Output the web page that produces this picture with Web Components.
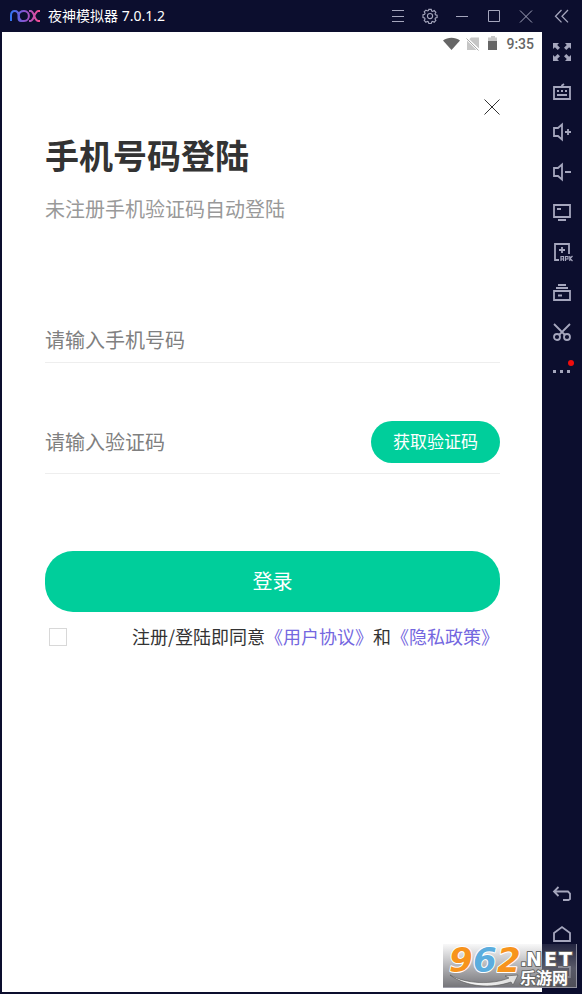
<!DOCTYPE html>
<html lang="zh-CN">
<head>
<meta charset="utf-8">
<title>夜神模拟器</title>
<style>
html, body { margin: 0; }
body { font-family: "Noto Sans", "Noto Sans CJK SC", sans-serif; background: #0c0e2e; }
</style>
</head>
<body>
<nox-window></nox-window>
<script>
const define = (name, html, setup) => customElements.define(name, class extends HTMLElement {
  connectedCallback() {
    if (this.shadowRoot) return;
    const t = document.createElement('template');
    t.innerHTML = html;
    this.attachShadow({ mode: 'open' }).append(t.content.cloneNode(true));
    if (setup) setup(this, this.shadowRoot);
  }
});

const icons = {
  menu: '<path d="M3 3.5h12M3 9.5h12M3 14.5h12"/>',
  gear: '<g transform="translate(1.300 1.300) scale(.86)" stroke-width="1.300"><path d="M7.6 1.200h2.800l.5 1.900 1.200.5 1.700-1 2 2-1 1.700.5 1.200 1.900.5v2.800l-1.900.5-.5 1.200 1 1.700-2 2-1.700-1-1.200.5-.5 1.900H7.600l-.5-1.900-1.200-.5-1.700 1-2-2 1-1.700-.5-1.200-1.900-.5V7.500l1.900-.5.5-1.200-1-1.700 2-2 1.700 1 1.200-.5z"/><circle cx="9" cy="9" r="3"/></g>',
  minimize: '<path d="M3 9.500h12"/>',
  maximize: '<path d="M3.500 3.500h11v11h-11z"/>',
  close: '<path d="M3 3.500l12 12M15 3.500l-12 12"/>',
  collapse: '<path stroke-width="1.300" d="M8.500 3l-6 6.200 6 6.200M15 3L9 9.200l6 6.200"/>',
  full: '<g fill="currentColor" stroke="none"><path d="M0 0h6L4.200 1.900 7 4.700 4.700 7 1.900 4.200 0 6zM18 0v6l-1.900-1.800L13.300 7 11 4.700l2.800-2.800L12 0zM0 18v-6l1.900 1.800L4.700 11 7 13.300l-2.800 2.800L6 18zM18 18h-6l1.800-1.900-2.800-2.800 2.300-2.300 2.800 2.800L18 12z"/></g>',
  keyboard: '<path stroke-width="1.800" d="M1 4h16v12H1zM9 4V2.500L11 1M4 8h2M8 8h2M12 8h2M4 12h10"/>',
  volup: '<path stroke-width="1.800" d="M9 1.500v15L5 13H1V5h4zM12 9h6M15 6v6"/>',
  voldown: '<path stroke-width="1.800" d="M9 1.500v15L5 13H1V5h4zM12 9h6"/>',
  screen: '<path stroke-width="1.800" d="M1 2h16v12H1zM4 6h4M5 17h8"/>',
  apk: '<path stroke-width="1.800" d="M6 17H2V1h14v10M9 4v6M6 7h6"/><path stroke-width="1.200" d="M8 18v-4.500h2.500V18M8 16h2.500M12.500 18v-4.500h2.500V16h-2.500M16.800 13v5M19.500 13l-2.500 2.500 2.500 2.500"/>',
  stack: '<path stroke-width="1.800" d="M5 2h8M3 5h12M1 8h16v9H1zM5 12.500h4"/>',
  scissors: '<g stroke-width="1.800"><path d="M1 1l11 11M17 1L6 12"/><circle cx="4" cy="14" r="3"/><circle cx="14" cy="14" r="3"/></g>',
  more: '<path fill="currentColor" stroke="none" d="M0 7h3v3H0zM7 7h3v3H7zM14 7h3v3h-3z"/>',
  back: '<path stroke-width="1.800" d="M5.500 2L1 6.500 5.500 11M1 6.500h14l2 2V14l-1.500 1H10"/>',
  home: '<path stroke-width="1.800" d="M1 8l8-6 8 6v8H1z"/>',
  recent: '<path stroke-width="1.800" d="M5 2h12v10h-3M1 6h12v10H1z"/>'
};

define('tool-button', `<style>
:host { display: flex; width: 32px; height: 32px; position: relative; color: #a5a6bd; }
button { flex: 1; display: grid; place-items: center; padding: 0; border: 0; background: none; color: inherit; }
svg { display: block; width: 18px; height: 18px; fill: none; stroke: currentColor; stroke-width: 1; overflow: visible; }
i { display: none; position: absolute; right: 8px; top: 8px; width: 6px; height: 6px; border-radius: 50%; background: #f00d0d; }
:host([badge]) i { display: block; }
</style><button></button><i></i>`, (host, root) => {
  const b = root.querySelector('button');
  b.setAttribute('aria-label', host.getAttribute('label'));
  b.innerHTML = '<svg viewBox="0 0 18 18">' + icons[host.getAttribute('icon')] + '</svg>';
});

define('title-bar', `<style>
:host { display: flex; align-items: center; height: 32px; color: #fff; font-size: 14px; }
svg { width: 32px; height: 14px; margin: 0 7px 0 9px; }
span { flex: 1; line-height: 20px; white-space: nowrap; }
tool-button:last-child { width: 40px; }
</style>
<svg viewBox="0 0 32 14" fill="none" stroke="url(#g)" stroke-width="2">
<defs><linearGradient id="g" gradientUnits="userSpaceOnUse" x1="0" x2="31" y1="0" y2="0"><stop stop-color="#2678f5"/><stop offset=".5" stop-color="#8954cf"/><stop offset="1" stop-color="#f94c8f"/></linearGradient></defs>
<path d="M2 12V6.500C2 .5 9.500.5 9.500 6.500V9c0 1.500 1 3 2.500 3h3c6.500 0 6.500-10 0-10s-6.500 7-2.500 10M20 2h1.500c4 0 3.500 10 8 10H31M31 2h-1.500c-4.500 0-4 10-8 10H20"/></svg>
<span>夜神模拟器 7.0.1.2</span>
<tool-button icon="menu" label="菜单"></tool-button><tool-button icon="gear" label="设置"></tool-button><tool-button icon="minimize" label="最小化"></tool-button><tool-button icon="maximize" label="最大化"></tool-button><tool-button icon="close" label="关闭"></tool-button><tool-button icon="collapse" label="收起"></tool-button>`);

define('side-bar', `<style>
:host { display: flex; flex-direction: column; width: 40px; }
tool-button { width: 40px; height: 40px; }
div { flex: 1; }
</style>
<tool-button icon="full" label="全屏"></tool-button><tool-button icon="keyboard" label="键盘"></tool-button><tool-button icon="volup" label="音量加"></tool-button><tool-button icon="voldown" label="音量减"></tool-button><tool-button icon="screen" label="屏幕"></tool-button><tool-button icon="apk" label="安装应用"></tool-button><tool-button icon="stack" label="多开"></tool-button><tool-button icon="scissors" label="截图"></tool-button><tool-button icon="more" label="更多" badge></tool-button>
<div></div>
<tool-button icon="back" label="返回"></tool-button><tool-button icon="home" label="主页"></tool-button><tool-button icon="recent" label="最近"></tool-button>`);

define('status-bar', `<style>
:host { display: flex; justify-content: flex-end; align-items: center; height: 24px; padding-right: 8px; font: 500 14px/24px Roboto, sans-serif; color: #666; }
svg { width: 56px; height: 16px; margin-right: 7px; }
</style>
<svg viewBox="0 0 56 16"><path fill="#666" d="M0 4.500C5 .7 12 .7 17 4.500L8.500 14z"/><path fill="#c6c6c6" d="M28 1.500h8v11L26 3.500zM24 4.500l9.500 9.500H24z"/><path stroke="#fff" d="M24.500 2l12 12"/><path stroke="#aaa" d="M23.500 2.500l12 12"/><path fill="#c6c6c6" d="M48 0h4v1.500h2V5h-9V1.500h3z"/><path fill="#666" d="M45 5h9v9h-9z"/></svg>
<time>9:35</time>`);

define('form-field', `<style>
:host { display: flex; align-items: center; height: 44px; border-bottom: 1px solid #eee; }
input { flex: 1; min-width: 0; height: 32px; padding: 0; border: 0; outline: 0; background: none; font: 20px/32px "Noto Sans CJK SC", sans-serif; color: #333; }
input::placeholder { color: #808080; opacity: 1; }
</style><input type="text"><slot></slot>`, (host, root) => {
  const i = root.querySelector('input');
  i.placeholder = host.getAttribute('placeholder');
  i.setAttribute('aria-label', i.placeholder);
});

define('pill-button', `<style>
:host { display: flex; }
button { flex: 1; padding: 0 0 2px; border: 0; border-radius: 28px; background: #00ce9b; color: #fff; font: inherit; }
</style><button><slot></slot></button>`);

define('agreement-row', `<style>
:host { display: flex; align-items: center; justify-content: space-between; height: 50px; padding: 0 1px 0 4px; font-size: 18px; line-height: 26px; color: #333; }
input { appearance: none; width: 18px; height: 18px; margin: 0; border: 1px solid #d8d8d8; background: #fff; }
span { padding-bottom: 2px; }
a { color: #7467e0; text-decoration: none; }
</style><input type="checkbox" id="agree"><span><label for="agree">注册/登陆即同意</label><a href="#terms">《用户协议》</a>和<a href="#privacy">《隐私政策》</a></span>`);

define('login-form', `<style>
:host { display: block; padding: 35px 42px 0 43px; font-family: "Noto Sans CJK SC", sans-serif; }
header { display: flex; justify-content: flex-end; }
.x { width: 32px; height: 32px; padding: 0; border: 0; background: none; display: flex; justify-content: flex-end; align-items: center; }
svg { width: 16px; height: 16px; }
h1 { margin: 10px 0 0; font-size: 34px; line-height: 44px; font-weight: 700; color: #333; }
p { margin: 18px 0 95px; font-size: 20px; line-height: 28px; color: #999; }
.code { height: 63px; margin-top: 47px; }
.get { width: 129px; height: 42px; font-size: 17px; }
.login { height: 61px; margin-top: 77px; font-size: 20px; }
</style>
<header><button class="x" aria-label="关闭"><svg viewBox="0 0 16 16" stroke="#333" stroke-width="1"><path d="M.5.5l15 15M15.500.5l-15 15"/></svg></button></header>
<h1>手机号码登陆</h1><p>未注册手机验证码自动登陆</p>
<form-field placeholder="请输入手机号码"></form-field>
<form-field class="code" placeholder="请输入验证码"><pill-button class="get">获取验证码</pill-button></form-field>
<pill-button class="login">登录</pill-button>
<agreement-row></agreement-row>`);

define('site-mark', `<style>
:host { display: block; width: 134px; height: 44px; background: linear-gradient(rgba(200,200,205,.12), rgba(130,130,135,.65) 55%, rgba(90,90,95,.85)); box-shadow: inset -1px -1px rgba(190,190,205,.6); }
svg { display: block; overflow: visible; }
text { font-family: "DejaVu Sans", "Noto Sans CJK SC", sans-serif; font-weight: 700; paint-order: stroke; stroke-linejoin: round; }
</style>
<svg width="134" height="44" viewBox="0 0 134 44">
<defs><linearGradient id="s"><stop stop-color="#fff"/><stop offset="1" stop-color="#ddd"/></linearGradient></defs>
<path fill="url(#s)" stroke="#555" stroke-width=".6" d="M7 31c16 9 42 10 59 3l-4-2 13-1-5 10-2-3C48 45 23 43 7 31z"/>
<g font-size="34" font-style="italic" stroke="#fff" stroke-width="2"><text x="6" y="28" fill="#f7941d">9</text><text x="30" y="28" fill="#5badde">6</text><text x="54" y="28" fill="#f7941d">2</text></g>
<g font-size="19" fill="#fff" stroke="#666" stroke-width="2"><text x="77" y="22">.</text><text x="83" y="22">N</text><text x="101" y="22">E</text><text x="116" y="22">T</text></g>
<text x="77" y="40" font-size="16" fill="#fff" stroke="#666" stroke-width="2">乐游网</text>
</svg>`);

define('nox-window', `<style>
:host { display: flex; flex-direction: column; min-height: 100vh; position: relative; background: #0c0e2e; }
.body { flex: 1; display: flex; }
main { flex: 1; margin: 0 0 2px 2px; background: #fff; }
site-mark { position: absolute; right: 5px; bottom: 6px; }
</style>
<title-bar></title-bar>
<div class="body"><main><status-bar></status-bar><login-form></login-form></main><side-bar></side-bar></div>
<site-mark></site-mark>`);
</script>
</body>
</html>
